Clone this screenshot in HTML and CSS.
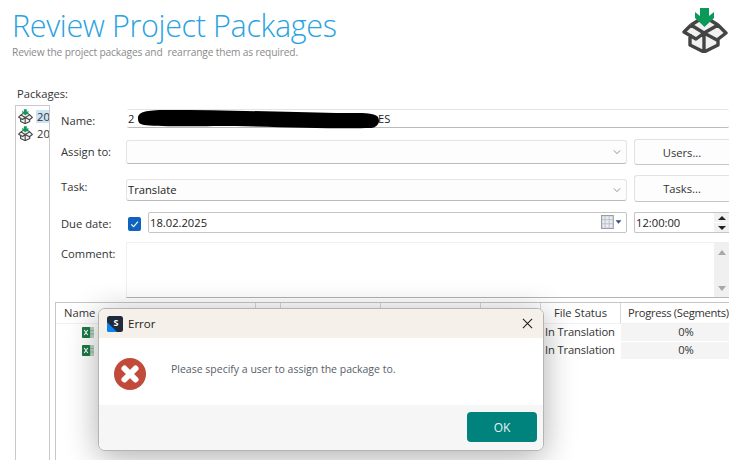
FILE: index.html
```html
<!DOCTYPE html>
<html lang="en">
<head>
<meta charset="utf-8">
<title>Review Project Packages</title>
<link rel="stylesheet" href="styles.css">
</head>
<body>
<svg class="defs" width="0" height="0" aria-hidden="true">
  <symbol id="box" viewBox="0 0 46 46">
    <path d="M9 19 22 12 36 19 44 26 36 32V38L22 45 8 38V30L2 25Z" fill="#f1f1f1"/>
    <path d="M8 27V38L22 45 36 38V32M22 45V26M9 18 2 25 14 32 22 26 35 33 44 26 36 18 22 26 9 18M9 18 17 13M28 13 36 18" fill="none" stroke="#444" stroke-width="3.400" stroke-linejoin="round"/>
    <path d="M18 1H27V9L32 5V11L22.500 20 13 11V5L18 9Z" fill="#0a9a58"/>
  </symbol>
  <symbol id="xls" viewBox="0 0 12 13">
    <rect x="5" y="1" width="7" height="11" fill="#b9d6c4"/>
    <path d="M8 1V12M5 4.500H12M5 8H12" stroke="#7fae92" stroke-width=".7"/>
    <rect x="0" y="1" width="8" height="11" rx=".8" fill="#1c7a45"/>
    <path d="M2.200 4 5.800 9M5.800 4 2.200 9" stroke="#fff" stroke-width="1.100"/>
  </symbol>
</svg>

<header class="head">
  <div>
    <h1 class="title">Review Project Packages</h1>
    <p class="subtitle">Review the project packages and&nbsp; rearrange them as required.</p>
  </div>
  <svg class="head-icon"><use href="#box"/></svg>
</header>

<div class="pkg-label">Packages:</div>

<main class="main">
  <aside class="tree">
    <div class="tree-row"><svg class="tree-icon"><use href="#box"/></svg><span class="tree-text sel">20</span></div>
    <div class="tree-row"><svg class="tree-icon"><use href="#box"/></svg><span class="tree-text">20</span></div>
  </aside>

  <section class="panel">
    <div class="form">
      <label class="lbl lbl-name">Name:</label>
      <div class="field name-field">
        <span class="val">2</span><span class="name-end">ES</span>
        <svg class="redact" viewBox="0 0 244 19" preserveAspectRatio="none"><path d="M2 8C2 2 10 0 30 0 90 0 150 2 200 3 220 3 236 2 241 6 245 10 243 17 235 18 200 19 150 17 100 16 60 16 20 17 8 15 3 14 2 12 2 8Z" fill="#000"/></svg>
      </div>

      <label class="lbl lbl-assign">Assign to:</label>
      <div class="field combo assign-combo"><svg class="chev" viewBox="0 0 10 6"><path d="M1 1 5 5 9 1" fill="none" stroke="#777" stroke-width="1"/></svg></div>
      <button class="btn users-btn">Users...</button>

      <label class="lbl lbl-task">Task:</label>
      <div class="field combo task-combo"><span class="val">Translate</span><svg class="chev" viewBox="0 0 10 6"><path d="M1 1 5 5 9 1" fill="none" stroke="#777" stroke-width="1"/></svg></div>
      <button class="btn tasks-btn">Tasks...</button>

      <label class="lbl lbl-due">Due date:</label>
      <div class="date-wrap">
        <span class="check"><svg viewBox="0 0 12 12"><path d="M3 6.300 5.200 8.400 9.200 3.800" fill="none" stroke="#fff" stroke-width="1"/></svg></span>
        <div class="field date-field">
          <span class="val">18.02.2025</span>
          <svg class="cal" viewBox="0 0 18 12"><rect x=".5" y=".5" width="10" height="11" fill="#e9edf2" stroke="#9a9ea4"/><path d="M3.500 1V11M7 1V11M1 4H10M1 7.500H10" stroke="#b9bec6" stroke-width=".8"/><path d="M12.500 4.500H17.500L15 7.500Z" fill="#35507f"/></svg>
        </div>
      </div>
      <div class="field time-field">
        <span class="val">12:00:00</span>
        <span class="spin"><span class="spin-b"><i class="up"></i></span><span class="spin-b"><i class="down"></i></span></span>
      </div>

      <label class="lbl lbl-comment">Comment:</label>
      <div class="field comment">
        <div class="scroll"><i class="s-up"></i><i class="s-down"></i></div>
      </div>
    </div>

    <div class="table">
      <div class="thead">
        <div class="th c-name">Name</div>
        <div class="th c-a"></div>
        <div class="th c-b"></div>
        <div class="th c-c"></div>
        <div class="th c-d"></div>
        <div class="th c-status">File Status</div>
        <div class="th c-prog">Progress (Segments)</div>
      </div>
      <div class="tr">
        <div class="td c-name"><svg class="xls"><use href="#xls"/></svg></div>
        <div class="td c-mid"></div>
        <div class="td c-status">In Translation</div>
        <div class="td c-prog pct">0%</div>
      </div>
      <div class="tr">
        <div class="td c-name"><svg class="xls"><use href="#xls"/></svg></div>
        <div class="td c-mid"></div>
        <div class="td c-status">In Translation</div>
        <div class="td c-prog pct">0%</div>
      </div>
    </div>
  </section>
</main>

<div class="dialog" role="dialog">
  <div class="dlg-title">
    <svg class="app-icon" viewBox="0 0 16 16"><rect width="16" height="16" rx="2.500" fill="#1f2a3c"/><path d="M0 6 10 16H2.500A2.500 2.500 0 0 1 0 13.500Z" fill="#0a84f0"/><text x="9" y="9.500" class="app-s">S</text></svg>
    <span class="dlg-name">Error</span>
    <svg class="close" viewBox="0 0 12 12"><path d="M1 1 11 11M11 1 1 11" stroke="#1a1a1a" stroke-width="1.100"/></svg>
  </div>
  <div class="dlg-body">
    <svg class="err" viewBox="0 0 32 32"><circle cx="16" cy="16" r="16" fill="#c14a3a"/><path d="M10.500 10.500 21.500 21.500M21.500 10.500 10.500 21.500" stroke="#fff" stroke-width="6" stroke-linecap="round"/></svg>
    <span class="msg">Please specify a user to assign the package to.</span>
  </div>
  <div class="dlg-foot"><button class="ok">OK</button></div>
</div>
</body>
</html>
```
FILE: styles.css
```css
* { box-sizing: border-box; }
html, body { margin: 0; height: 460px; overflow: hidden; background: #fff; }
body { position: relative; font-family: "Open Sans", "Noto Sans", sans-serif; font-size: 11.2px; color: #333; }
.defs { position: absolute; }

.head { display: flex; justify-content: space-between; height: 84px; padding: 0 0 0 12px; }
.title { margin: 7px 0 0; font-size: 30.500px; font-weight: 300; line-height: 36px; color: #27a3e0; letter-spacing: -.35px; white-space: nowrap; }
.subtitle { margin: 2px 0 0; font-size: 10.200px; line-height: 14px; color: #8a8a8a; font-weight: 400; letter-spacing: -.14px; white-space: nowrap; }
.head-icon { width: 46px; height: 46px; margin: 7px 1px 0 0; }

.pkg-label { height: 21px; padding: 1px 0 0 17px; line-height: 17px; }

.main { display: flex; padding-left: 15px; height: 355px; }
.tree { width: 35px; border: 1.500px solid #c8c8d0; border-bottom: 0; padding-top: 2px; overflow: hidden; flex: none; }
.tree-row { display: flex; align-items: center; height: 17px; padding-left: 2px; gap: 3px; }
.tree-icon { width: 15px; height: 15px; flex: none; }
.tree-text { width: 13px; line-height: 13px; padding-left: 1px; overflow: hidden; }
.sel { background: #cce4f7; }

.panel { flex: 1; min-width: 0; }
.form { display: grid; grid-template-columns: 76px 501px 7px 95px; padding-top: 4px; align-items: center; width: 679px; }
.lbl { padding-left: 11px; color: #333; white-space: nowrap; }
.field { position: relative; display: flex; align-items: center; background: #fff; border: 1px solid #e4e4e4; border-bottom-color: #bcbcbc; border-radius: 2px; height: 20px; }
.val { padding-left: 1px; color: #222; white-space: nowrap; }

.lbl-name { grid-column: 1; margin-top: 4px; }
.name-field { grid-column: 2 / 5; height: 19px; margin-left: 1px; border-left: 0; border-right: 0; }
.name-end { position: absolute; left: 251px; top: 1px; color: #222; }
.redact { position: absolute; left: 9px; top: 0; width: 244px; height: 19px; }

.lbl-assign { grid-column: 1; margin-top: 9px; }
.assign-combo { grid-column: 2; height: 24px; margin-top: 11px; background: #fdfdfd; border-radius: 3px; }
.users-btn { grid-column: 4; margin-top: 11px; height: 26px; }

.lbl-task { grid-column: 1; margin-top: 7px; align-self: start; padding-top: 7px; }
.task-combo { grid-column: 2; height: 22px; margin-top: 12px; background: #fdfdfd; border-radius: 3px; }
.tasks-btn { grid-column: 4; margin-top: 10px; height: 27px; }

.chev { position: absolute; right: 5px; top: 50%; margin-top: -3px; width: 8px; height: 6px; }
.btn { font: inherit; color: #333; background: #fdfdfd; border: 1px solid #e2e2e2; border-bottom-color: #c6c6c6; border-radius: 3px 0 0 3px; border-right: 0; padding: 0; }

.lbl-due { grid-column: 1; align-self: start; margin-top: 14px; }
.date-wrap { grid-column: 2; display: flex; align-items: center; margin-top: 10px; gap: 7px; padding-left: 2px; }
.check { display: flex; width: 13px; height: 14px; background: #0f62bd; border-radius: 2px; margin-top: 2px; flex: none; }
.check svg { width: 13px; height: 14px; }
.date-field { flex: 1; height: 21px; border: 1px solid #c4c4c4; border-radius: 2px; padding-left: 0; }
.cal { position: absolute; right: 4px; top: 2px; width: 21px; height: 14px; }
.time-field { grid-column: 4; height: 21px; margin-top: 10px; border: 1px solid #c4c4c4; border-right: 0; padding-left: 0; border-radius: 2px 0 0 2px; }
.spin { position: absolute; right: 0; top: 0; width: 15px; height: 19px; display: flex; flex-direction: column; gap: 1px; }
.spin-b { flex: 1; display: flex; align-items: center; justify-content: center; background: #f1f1f1; }
.up { border: 4px solid transparent; border-top: 0; border-bottom: 4px solid #222; }
.down { border: 4px solid transparent; border-bottom: 0; border-top: 4px solid #222; }

.lbl-comment { grid-column: 1; align-self: start; margin-top: 13px; }
.comment { grid-column: 2 / 5; height: 56px; margin-top: 9px; border-radius: 0; border-color: #f0f0f0; border-bottom-color: #b4b4b4; border-right: 0; }
.scroll { position: absolute; right: 0; top: 0; bottom: 0; width: 15px; background: #f0f0f0; display: flex; flex-direction: column; justify-content: space-between; align-items: center; padding: 7px 0 6px; }
.s-up { border: 4px solid transparent; border-top: 0; border-bottom: 5px solid #a8a8a8; }
.s-down { border: 4px solid transparent; border-bottom: 0; border-top: 5px solid #a8a8a8; }

.table { margin: 4px 0 0 5px; border: 1px solid #c6c6c6; border-right: 0; border-bottom: 0; height: 160px; }
.thead { display: flex; height: 21px; border-bottom: 1px solid #f0f0f0; }
.th { height: 20px; line-height: 19px; border-right: 1px solid #d8d8d8; color: #333; text-align: center; flex: none; }
.c-name { width: 200px; text-align: left; padding-left: 8px; }
.c-a { width: 25px; }
.c-b { width: 100px; }
.c-c { width: 100px; }
.c-d { width: 60px; }
.c-mid { width: 285px; }
.c-status { width: 80px; text-align: center; flex: none; }
.c-prog { flex: 1; }
.th.c-prog { text-align: left; padding-left: 7px; border-right: 0; white-space: nowrap; letter-spacing: -.3px; }
.tr { display: flex; height: 18px; }
.td { flex: none; height: 17px; line-height: 16px; }
.td.c-name { padding-left: 26px; }
.xls { width: 12px; height: 13px; display: block; margin-top: 2px; }
.td.c-status { text-align: left; padding-left: 4px; white-space: nowrap; letter-spacing: -.12px; }
.pct { flex: 1; background: #f4f4f4; text-align: center; padding-left: 22px; }

.dialog { position: absolute; left: 98px; top: 308px; width: 446px; height: 143px; display: flex; flex-direction: column; background: #fff; border: 1px solid #b4b4b4; border-radius: 7px; overflow: hidden; box-shadow: 0 6px 32px rgba(0, 0, 0, .32); }
.dlg-title { height: 29px; flex: none; display: flex; align-items: center; background: #f5f1ea; padding: 0 10px 0 8px; }
.app-icon { width: 16px; height: 16px; flex: none; }
.app-s { font: 700 9px "Open Sans", sans-serif; fill: #fff; text-anchor: middle; }
.dlg-name { margin-left: 5px; font-size: 11.500px; color: #222; }
.close { width: 11px; height: 11px; margin-left: auto; }
.dlg-body { height: 67px; flex: none; display: flex; align-items: flex-start; padding: 20px 0 0 15px; background: #fff; }
.err { width: 32px; height: 32px; flex: none; }
.msg { margin-left: 25px; padding-top: 4px; font-size: 10.500px; line-height: 15px; color: #56606a; white-space: nowrap; }
.dlg-foot { flex: 1; display: flex; justify-content: flex-end; align-items: center; padding-right: 6px; background: #f6f6f6; }
.ok { width: 70px; height: 30px; margin-top: -1px; font: inherit; font-size: 12px; color: #e6f4f3; background: #00827d; border: 0; border-radius: 4px; }
```
